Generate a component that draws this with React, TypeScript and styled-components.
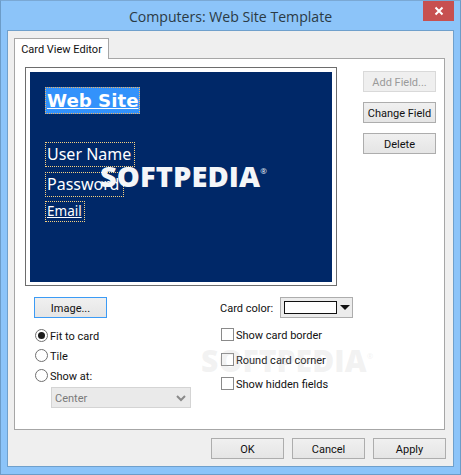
import React from "react";
import styled, { createGlobalStyle } from "styled-components";

const Global = createGlobalStyle`
  html, body { margin: 0; padding: 0; background: #8cc4f9; }
  body { width: 461px; height: 475px; overflow: hidden; font-family: Roboto, "Noto Sans", sans-serif; font-size: 11px; color: #111; }
  * { box-sizing: border-box; }
`;

const Frame = styled.div`
  position: relative; width: 461px; height: 475px; background: #8cc4f9;
  border: 1px solid #6c9cc8; border-top-color: #7aa8d4; display: flex; flex-direction: column;
  overflow: hidden;
`;
const TitleBar = styled.div`
  position: relative; height: 29px; flex: none; display: flex; align-items: center; justify-content: center;
  padding-top: 2px; font-size: 14.1px; color: #2b3a44; font-family: "Open Sans", sans-serif;
`;
const Close = styled.div`
  position: absolute; top: 0; right: 6px; width: 31px; height: 20px; background: #c75050;
  display: flex; align-items: center; justify-content: center;
`;
const Client = styled.div`
  flex: none; margin: 0 6px; width: 447px; height: 437px; background: #efefef;
  border: 1px solid #6fa0cc; padding: 7px 6px 0 6px; display: flex; flex-direction: column;
`;
const TabRow = styled.div`display: flex; height: 21px; position: relative; z-index: 1;`;
const Tab = styled.div`
  width: 95px; height: 21px; background: #fff; border: 1px solid #a6a6a6; border-bottom: none;
  display: flex; align-items: center; justify-content: center; padding-top: 1px;
`;
const Panel = styled.div`
  margin-top: -1px; width: 431px; height: 372px; background: #fff; border: 1px solid #a6a6a6;
  padding: 8px 7px 0 10px; display: flex; flex-direction: column;
`;
const TopRow = styled.div`display: flex; align-items: flex-start; gap: 26px;`;
const CardFrame = styled.div`
  width: 312px; height: 219px; border: 1px solid #6d6d6d; padding: 4px; background: #fff; flex: none;
`;
const Card = styled.div`
  width: 302px; height: 210px; background: #002868; padding: 15px 0 0 15px; display: flex; flex-direction: column; align-items: flex-start;
  font-family: "Noto Sans", sans-serif; color: #fff;
`;
const Heading = styled.div`
  height: 27px; width: 95px; background: #3392fb; border: 1px dotted #f0b060; font-family: "DejaVu Sans", sans-serif;
  font-weight: 700; font-size: 18.2px; line-height: 25px; padding-left: 1px; text-decoration: underline; white-space: nowrap;
`;
const Field = styled.div<{ $w: number; $h: number; $size: number; $mt: number; $u?: boolean }>`
  width: ${p => p.$w}px; height: ${p => p.$h}px; margin-top: ${p => p.$mt}px; border: 1px dotted #f6d080;
  font-size: ${p => p.$size}px; line-height: ${p => p.$h - 3}px; padding-left: 1px; white-space: nowrap;
  text-decoration: ${p => (p.$u ? "underline" : "none")};
`;
const SideButtons = styled.div`display: flex; flex-direction: column; gap: 10px; padding-top: 4px;`;
const Btn = styled.div<{ $off?: boolean; $focus?: boolean }>`
  width: 73px; height: 21px; display: flex; align-items: center; justify-content: center;
  white-space: nowrap; padding-top: 2px;
  border: 1px solid ${p => (p.$off ? "#d9d9d9" : p.$focus ? "#3c9bf5" : "#adadad")};
  color: ${p => (p.$off ? "#9a9a9a" : "#111")};
  background: ${p => (p.$off ? "#efefef" : "linear-gradient(#f0f0f0, #e5e5e5)")};
`;
const LowerRow = styled.div`display: grid; grid-template-columns: 186px 1fr; margin-top: 11px; padding-left: 9px;`;
const LeftCol = styled.div`display: flex; flex-direction: column; align-items: flex-start;`;
const RightCol = styled.div`display: flex; flex-direction: column; align-items: flex-start;`;
const Radios = styled.div`display: flex; flex-direction: column; gap: 7px; margin-top: 11px;`;
const RowLabel = styled.span`position: relative; top: 1px;`;
const RadioRow = styled.div`display: flex; align-items: center; gap: 2px; height: 13px; margin-left: 1px;`;
const Radio = styled.span<{ $on?: boolean }>`
  width: 13px; height: 13px; border-radius: 50%; border: 1px solid #707070; background: #fff; display: flex; align-items: center; justify-content: center;
  &::after { content: ""; width: 7px; height: 7px; border-radius: 50%; background: ${p => (p.$on ? "#1c1c1c" : "transparent")}; }
`;
const Select = styled.div`
  margin: 5px 0 0 17px; width: 140px; height: 21px; background: #eaeaea; border: 1px solid #d4d4d4; color: #7a7a7a;
  display: flex; align-items: center; justify-content: space-between; padding: 1px 4px 0 3px;
`;
const ColorRow = styled.div`display: grid; grid-template-columns: 60px 73px; align-items: center;`;
const ColorBtn = styled.div`
  width: 73px; height: 21px; border: 1px solid #adadad; background: #ececec; display: flex; align-items: center; padding-left: 3px; gap: 3px;
`;
const Swatch = styled.span`width: 53px; height: 13px; background: #fff; border: 1px solid #111; flex: none;`;
const Arrow = styled.span`width: 0; height: 0; border-left: 5px solid transparent; border-right: 5px solid transparent; border-top: 5px solid #111;`;
const CheckRow = styled.div<{ $mt: number }>`display: flex; align-items: center; gap: 2px; height: 13px; margin-top: ${p => p.$mt}px; margin-left: 1px; white-space: nowrap;`;
const Check = styled.span`width: 13px; height: 13px; background: #fff; border: 1px solid #8a8a8a; flex: none;`;
const Footer = styled.div`display: flex; justify-content: flex-end; gap: 8px; margin-top: 8px; width: 432px;`;
const Mark = styled.div<{ $x: number; $y: number; $color: string; $size: number }>`
  position: absolute; left: ${p => p.$x}px; top: ${p => p.$y}px; font-family: "Open Sans", "Noto Sans", sans-serif; font-weight: 800;
  font-size: ${p => p.$size}px; line-height: 1; color: ${p => p.$color}; letter-spacing: 0.1px; white-space: nowrap; pointer-events: none;
  & sup { font-size: 8px; font-weight: 400; vertical-align: 13px; line-height: 0; }
`;

export default function App() {
  return (
    <Frame>
      <Global />
      <TitleBar>
        Computers: Web Site Template
        <Close>
          <svg width="10" height="10" viewBox="0 0 10 10"><path d="M1.5 1.5 L8.5 8.5 M8.5 1.5 L1.5 8.5" stroke="#fff" strokeWidth="2" /></svg>
        </Close>
      </TitleBar>
      <Client>
        <TabRow><Tab>Card View Editor</Tab></TabRow>
        <Panel>
          <TopRow>
            <CardFrame>
              <Card>
                <Heading>Web Site</Heading>
                <Field $w={90} $h={25} $size={16} $mt={28}>User Name</Field>
                <Field $w={79} $h={25} $size={16} $mt={5}>Password</Field>
                <Field $w={40} $h={21} $size={13.5} $mt={4} $u>Email</Field>
              </Card>
            </CardFrame>
            <SideButtons>
              <Btn $off>Add Field...</Btn>
              <Btn>Change Field</Btn>
              <Btn>Delete</Btn>
            </SideButtons>
          </TopRow>
          <LowerRow>
            <LeftCol>
              <Btn $focus>Image...</Btn>
              <Radios>
                <RadioRow><Radio $on /><RowLabel>Fit to card</RowLabel></RadioRow>
                <RadioRow><Radio /><RowLabel>Tile</RowLabel></RadioRow>
                <RadioRow><Radio /><RowLabel>Show at:</RowLabel></RadioRow>
              </Radios>
              <Select>
                Center
                <svg width="10" height="7" viewBox="0 0 10 7"><path d="M1 1 L5 5 L9 1" fill="none" stroke="#8a8a8a" strokeWidth="2" /></svg>
              </Select>
            </LeftCol>
            <RightCol>
              <ColorRow>
                <RowLabel>Card color:</RowLabel>
                <ColorBtn><Swatch /><Arrow /></ColorBtn>
              </ColorRow>
              <CheckRow $mt={10}><Check /><RowLabel>Show card border</RowLabel></CheckRow>
              <CheckRow $mt={12}><Check /><RowLabel>Round card corner</RowLabel></CheckRow>
              <CheckRow $mt={11}><Check /><RowLabel>Show hidden fields</RowLabel></CheckRow>
            </RightCol>
          </LowerRow>
        </Panel>
        <Footer>
          <Btn>OK</Btn>
          <Btn>Cancel</Btn>
          <Btn>Apply</Btn>
        </Footer>
      </Client>
      <Mark $x={99} $y={160} $color="#f4f6f8" $size={29}>SOFTPEDIA<sup>®</sup></Mark>
      <Mark $x={200} $y={345} $color="rgba(190,190,190,0.2)" $size={30}>SOFTPEDIA<sup>®</sup></Mark>
    </Frame>
  );
}
